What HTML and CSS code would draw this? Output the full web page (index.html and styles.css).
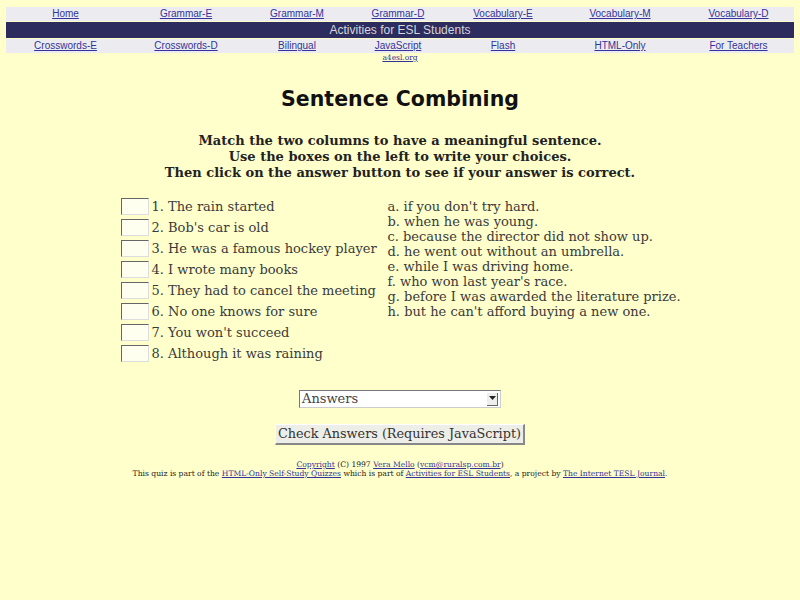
FILE: index.html
```html
<!DOCTYPE html>
<html>
<head>
<meta charset="utf-8">
<link rel="stylesheet" href="styles.css">
</head>
<body>
<div class="nav">
  <div class="nav-row">
    <a href="#">Home</a><a href="#">Grammar-E</a><a href="#">Grammar-M</a><a href="#">Grammar-D</a><a href="#">Vocabulary-E</a><a href="#">Vocabulary-M</a><a href="#">Vocabulary-D</a>
  </div>
  <div class="nav-title">Activities for ESL Students</div>
  <div class="nav-row">
    <a href="#">Crosswords-E</a><a href="#">Crosswords-D</a><a href="#">Bilingual</a><a href="#">JavaScript</a><a href="#">Flash</a><a href="#">HTML-Only</a><a href="#">For Teachers</a>
  </div>
  <div class="site"><a href="#">a4esl.org</a></div>
</div>

<h1 class="title">Sentence Combining</h1>
<p class="instructions">Match the two columns to have a meaningful sentence.<br>Use the boxes on the left to write your choices.<br>Then click on the answer button to see if your answer is correct.</p>

<div class="quiz">
  <div class="left">
    <div class="q"><span class="box"></span><span>1. The rain started</span></div>
    <div class="q"><span class="box"></span><span>2. Bob's car is old</span></div>
    <div class="q"><span class="box"></span><span>3. He was a famous hockey player</span></div>
    <div class="q"><span class="box"></span><span>4. I wrote many books</span></div>
    <div class="q"><span class="box"></span><span>5. They had to cancel the meeting</span></div>
    <div class="q"><span class="box"></span><span>6. No one knows for sure</span></div>
    <div class="q"><span class="box"></span><span>7. You won't succeed</span></div>
    <div class="q"><span class="box"></span><span>8. Although it was raining</span></div>
  </div>
  <div class="right">
    <div>a. if you don't try hard.</div>
    <div>b. when he was young.</div>
    <div>c. because the director did not show up.</div>
    <div>d. he went out without an umbrella.</div>
    <div>e. while I was driving home.</div>
    <div>f. who won last year's race.</div>
    <div>g. before I was awarded the literature prize.</div>
    <div>h. but he can't afford buying a new one.</div>
  </div>
</div>

<div class="controls">
  <div class="select"><span>Answers</span><span class="arrow"><svg width="7" height="5" viewBox="0 0 7 5"><path d="M0 0H7L3.5 4Z" fill="#222"/></svg></span></div>
  <div class="button">Check Answers (Requires JavaScript)</div>
</div>

<div class="footer">
  <div><a href="#">Copyright</a> (C) 1997 <a href="#">Vera Mello</a> (<a href="#">vcm@ruralsp.com.br</a>)</div>
  <div>This quiz is part of the <a href="#">HTML-Only Self-Study Quizzes</a> which is part of <a href="#">Activities for ESL Students</a>, a project by <a href="#">The Internet TESL Journal</a>.</div>
</div>
</body>
</html>
```

FILE: styles.css
```css
html, body {
  margin: 0;
  padding: 0;
  background: #ffffcc;
}
body {
  padding: 7px 6px 0 6px;
  font-family: "DejaVu Serif", serif;
  color: #3a3a3a;
}
a { color: #333399; }

.nav-row {
  display: grid;
  grid-template-columns: 119px 122px 100px 102px 108px 126px 111px;
  background: #ececf0;
  height: 14px;
  align-items: center;
  font-family: "Liberation Sans", Arial, sans-serif;
  font-size: 10px;
  justify-items: center;
}
.nav-row a { line-height: 12px; }
.nav-title {
  background: #2c2c5e;
  color: #d6d6dc;
  font-family: "Liberation Sans", Arial, sans-serif;
  font-size: 12px;
  text-align: center;
  height: 16px;
  line-height: 16px;
  margin: 1px 0 1px 0;
}
.site {
  text-align: center;
  font-family: "DejaVu Serif", serif;
  font-size: 7.5px;
  line-height: 9px;
  margin-top: 0;
  padding-left: 0;
}

.title {
  font-family: "DejaVu Sans", sans-serif;
  font-weight: bold;
  font-size: 20.5px;
  text-align: center;
  color: #111;
  margin: 22px 0 0 0;
  line-height: 30px;
}
.instructions {
  text-align: center;
  font-weight: bold;
  font-size: 13px;
  line-height: 16px;
  color: #222;
  margin: 19px 0 0 0;
}

.quiz {
  display: flex;
  justify-content: center;
  gap: 10px;
  margin-top: 18px;
  font-size: 13px;
  padding-left: 4px;
}
.left { width: 257px; }
.q {
  display: flex;
  align-items: center;
  height: 21px;
}
.q:first-child { margin-top: -3px; }
.box {
  width: 26px;
  height: 15px;
  border-top: 1px solid #666;
  border-left: 1px solid #666;
  border-right: 1px solid #ddd;
  border-bottom: 1px solid #ddd;
  background: #fffff0;
  margin-right: 3px;
  flex: none;
}
.right { width: 296px; line-height: 15px; }

.controls {
  display: flex;
  flex-direction: column;
  align-items: center;
  margin-top: 26px;
  font-size: 13px;
}
.select {
  width: 198px;
  height: 16px;
  border-top: 1px solid #777;
  border-left: 1px solid #777;
  border-right: 1px solid #ccc;
  border-bottom: 1px solid #ccc;
  background: #fff;
  display: flex;
  align-items: center;
  justify-content: space-between;
  line-height: 16px;
  padding-left: 2px;
  box-sizing: content-box;
  color: #444;
}
.arrow {
  width: 10px;
  height: 12px;
  margin-right: 2px;
  background: #eee;
  border-right: 1px solid #666;
  border-bottom: 1px solid #666;
  display: flex;
  align-items: center;
  justify-content: center;
}
.button {
  margin-top: 16px;
  background: #eeeee8;
  border-top: 1px solid #fff;
  border-left: 1px solid #fff;
  border-right: 2px solid #888;
  border-bottom: 2px solid #888;
  padding: 0 2px;
  height: 18px;
  line-height: 18px;
  color: #333;
  font-size: 12.8px;
}

.footer {
  text-align: center;
  font-family: "DejaVu Serif", serif;
  font-size: 7.6px;
  line-height: 9px;
  margin-top: 15px;
  color: #222;
}
```
